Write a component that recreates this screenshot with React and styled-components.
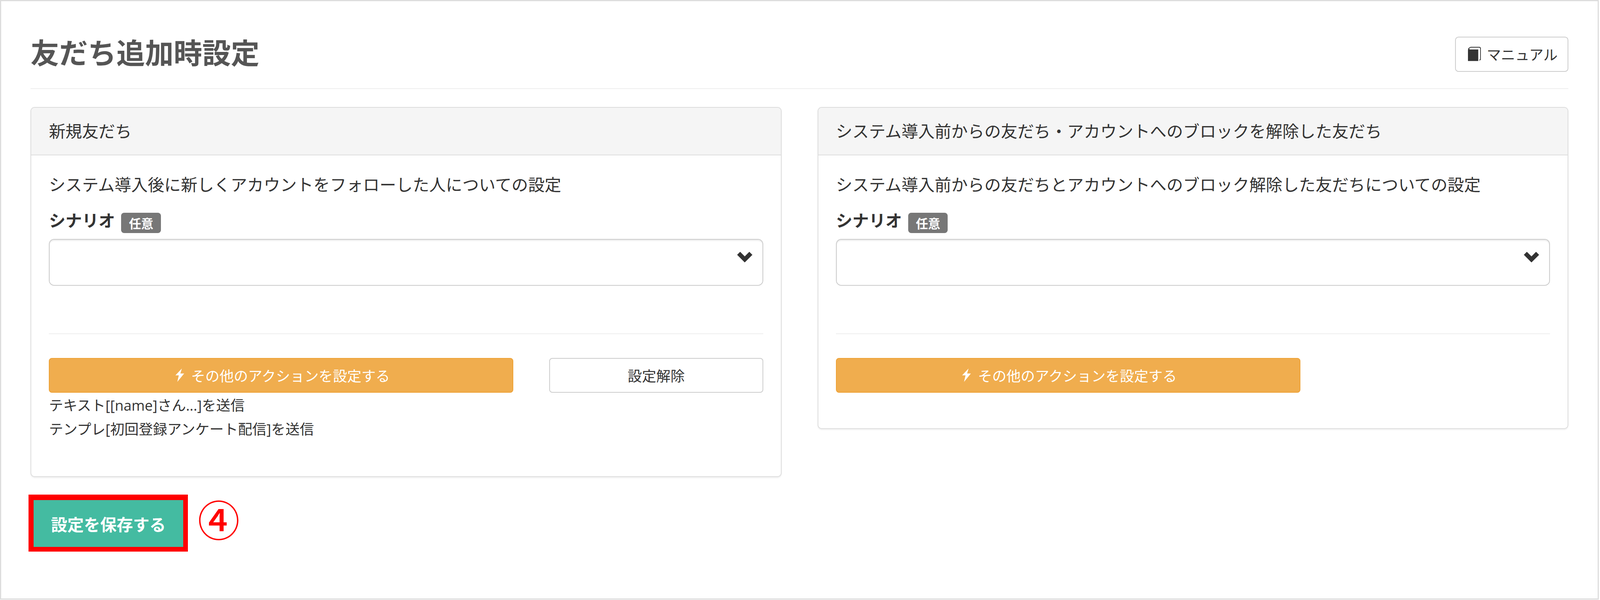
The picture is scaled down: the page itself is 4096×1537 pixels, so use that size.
import styled, { createGlobalStyle } from 'styled-components'

const px = (v) => `${v * 0.977}px`

const GlobalStyle = createGlobalStyle`
  html, body {
    margin: 0;
    padding: 0;
    background: #fff;
  }
  body {
    font-family: "Open Sans", "Noto Sans CJK JP", sans-serif;
    color: #333;
  }
`

const Frame = styled.div`
  box-sizing: border-box;
  width: ${px(4189)};
  height: ${px(1572)};
  padding: 0 ${px(76)} 0 ${px(77)};
  border: ${px(4)} solid #ddd;
  background: #fff;
  overflow: hidden;
`

const PageHeader = styled.div`
  display: flex;
  justify-content: space-between;
  align-items: flex-start;
  height: ${px(228)};
  border-bottom: ${px(3)} solid #eee;
`

const Title = styled.h1`
  margin: ${px(90)} 0 0;
  font-size: ${px(75)};
  line-height: ${px(90)};
  font-weight: 700;
  color: #555;
`

const ManualButton = styled.a`
  box-sizing: border-box;
  display: flex;
  align-items: center;
  justify-content: center;
  gap: ${px(15)};
  width: ${px(297)};
  height: ${px(92)};
  padding-left: ${px(4)};
  margin-top: ${px(93)};
  border: ${px(2.5)} solid #ccc;
  border-radius: ${px(9)};
  font-size: ${px(37.4)};
  color: #333;
  background: #fff;
`

const Panels = styled.div`
  display: flex;
  align-items: flex-start;
  gap: ${px(94)};
  margin-top: ${px(47)};
`

const Panel = styled.section`
  box-sizing: border-box;
  flex: 1;
  min-width: 0;
  border: ${px(2.5)} solid #ddd;
  border-radius: ${px(11)};
  background: #fff;
  box-shadow: 0 ${px(3)} ${px(3)} rgba(0, 0, 0, 0.05);
`

const PanelHeading = styled.div`
  box-sizing: border-box;
  display: flex;
  align-items: center;
  height: ${px(125)};
  padding: 0 ${px(46)} ${px(4)};
  background: #f5f5f5;
  border-bottom: ${px(2.5)} solid #ddd;
  border-radius: ${px(9)} ${px(9)} 0 0;
  font-size: ${px(43.4)};
  color: #333;
`

const PanelBody = styled.div`
  padding: ${px(46)} ${px(46)} ${px(93)};
`

const Desc = styled.p`
  margin: 0 0 ${px(30)};
  font-size: ${px(43.4)};
  line-height: ${px(62)};
`

const LabelRow = styled.div`
  display: flex;
  align-items: flex-start;
  gap: ${px(16)};
  height: ${px(81)};
`

const Label = styled.label`
  font-size: ${px(43.4)};
  line-height: ${px(66)};
  font-weight: 700;
`

const Badge = styled.span`
  display: flex;
  align-items: center;
  justify-content: center;
  width: ${px(104)};
  height: ${px(53)};
  margin-top: ${px(13)};
  border-radius: ${px(8)};
  background: #777;
  color: #fff;
  font-size: ${px(32)};
  font-weight: 700;
`

const SelectBox = styled.div`
  box-sizing: border-box;
  display: flex;
  justify-content: flex-end;
  height: ${px(123)};
  padding: ${px(32)} ${px(27)} 0 0;
  border: ${px(2.5)} solid #ccc;
  border-radius: ${px(14)};
  background: #fff;
  box-shadow: inset 0 ${px(3)} ${px(3)} rgba(0, 0, 0, 0.075);
`

const Chevron = styled.svg`
  width: ${px(40)};
  height: ${px(28)};
  fill: #333;
`

const Divider = styled.hr`
  margin: ${px(125)} 0 ${px(62)};
  border: 0;
  border-top: ${px(2.5)} solid #eee;
`

const ActionRow = styled.div`
  display: flex;
  justify-content: space-between;
`

const ActionButton = styled.button`
  box-sizing: border-box;
  display: flex;
  align-items: center;
  justify-content: center;
  gap: ${px(17)};
  width: ${px(1217)};
  height: ${px(92)};
  padding: 0 0 0 ${px(8)};
  border: ${px(2.5)} solid #eea236;
  border-radius: ${px(8)};
  background: #f0ad4e;
  color: #fff;
  font-family: inherit;
  font-size: ${px(37.4)};
`

const ClearButton = styled.button`
  box-sizing: border-box;
  width: ${px(561)};
  height: ${px(92)};
  padding: 0;
  border: ${px(2.5)} solid #ccc;
  border-radius: ${px(8)};
  background: #fff;
  color: #333;
  font-family: inherit;
  font-size: ${px(37.4)};
`

const ActionList = styled.div`
  margin-top: ${px(2)};
  font-size: ${px(37.4)};
  line-height: ${px(62)};
  color: #333;
`

const SaveRow = styled.div`
  display: flex;
  align-items: flex-start;
  gap: ${px(26)};
  margin: ${px(46)} 0 0 ${px(-5)};
`

const SaveButton = styled.button`
  box-sizing: border-box;
  width: ${px(417)};
  height: ${px(149)};
  padding: 0;
  border-style: solid;
  border-color: #f00;
  border-width: ${px(15)} ${px(13)} ${px(13)} ${px(14)};
  background: #44bba1;
  color: #fff;
  font-family: inherit;
  font-size: ${px(43)};
  font-weight: 700;
`

const StepMark = styled.span`
  margin-top: ${px(7)};
  font-size: ${px(110)};
  line-height: ${px(120)};
  font-weight: 500;
  color: #f00;
`

const BookIcon = () => (
  <svg width={35 * 0.977} height={38 * 0.977} viewBox="0 0 35 38">
    <path fill="#333" d="M1 9 Q1 6 3 4 L6 7 L28 7 L28 37 L1 37 Z" />
    <path fill="none" stroke="#333" strokeWidth="2" d="M2 6 Q4 2 9 1 L30 1 Q34 1 34 5 L34 33 L31 35" />
  </svg>
)

const BoltIcon = () => (
  <svg width={24 * 0.977} height={36 * 0.977} viewBox="0 0 24 36">
    <path fill="#fff" d="M17 0 L0 18 L9 18 L5 35 L23 13 L13 13 Z" />
  </svg>
)

const ScenarioPanel = ({ heading, desc, children }) => (
  <Panel>
    <PanelHeading>{heading}</PanelHeading>
    <PanelBody>
      <Desc>{desc}</Desc>
      <LabelRow>
        <Label>シナリオ</Label>
        <Badge>任意</Badge>
      </LabelRow>
      <SelectBox>
        <Chevron viewBox="0 0 40 28">
          <polygon points="0,8 8,0 20,12 32,0 40,8 20,28" />
        </Chevron>
      </SelectBox>
      <Divider />
      {children}
    </PanelBody>
  </Panel>
)

const App = () => {
  return (
    <Frame>
      <GlobalStyle />
      <PageHeader>
        <Title>友だち追加時設定</Title>
        <ManualButton>
          <BookIcon />
          マニュアル
        </ManualButton>
      </PageHeader>
      <Panels>
        <ScenarioPanel
          heading="新規友だち"
          desc="システム導入後に新しくアカウントをフォローした人についての設定"
        >
          <ActionRow>
            <ActionButton>
              <BoltIcon />
              その他のアクションを設定する
            </ActionButton>
            <ClearButton>設定解除</ClearButton>
          </ActionRow>
          <ActionList>
            <div>テキスト[[name]さん...]を送信</div>
            <div>テンプレ[初回登録アンケート配信]を送信</div>
          </ActionList>
        </ScenarioPanel>
        <ScenarioPanel
          heading="システム導入前からの友だち・アカウントへのブロックを解除した友だち"
          desc="システム導入前からの友だちとアカウントへのブロック解除した友だちについての設定"
        >
          <ActionRow>
            <ActionButton>
              <BoltIcon />
              その他のアクションを設定する
            </ActionButton>
          </ActionRow>
        </ScenarioPanel>
      </Panels>
      <SaveRow>
        <SaveButton>設定を保存する</SaveButton>
        <StepMark>④</StepMark>
      </SaveRow>
    </Frame>
  )
}

export default App
